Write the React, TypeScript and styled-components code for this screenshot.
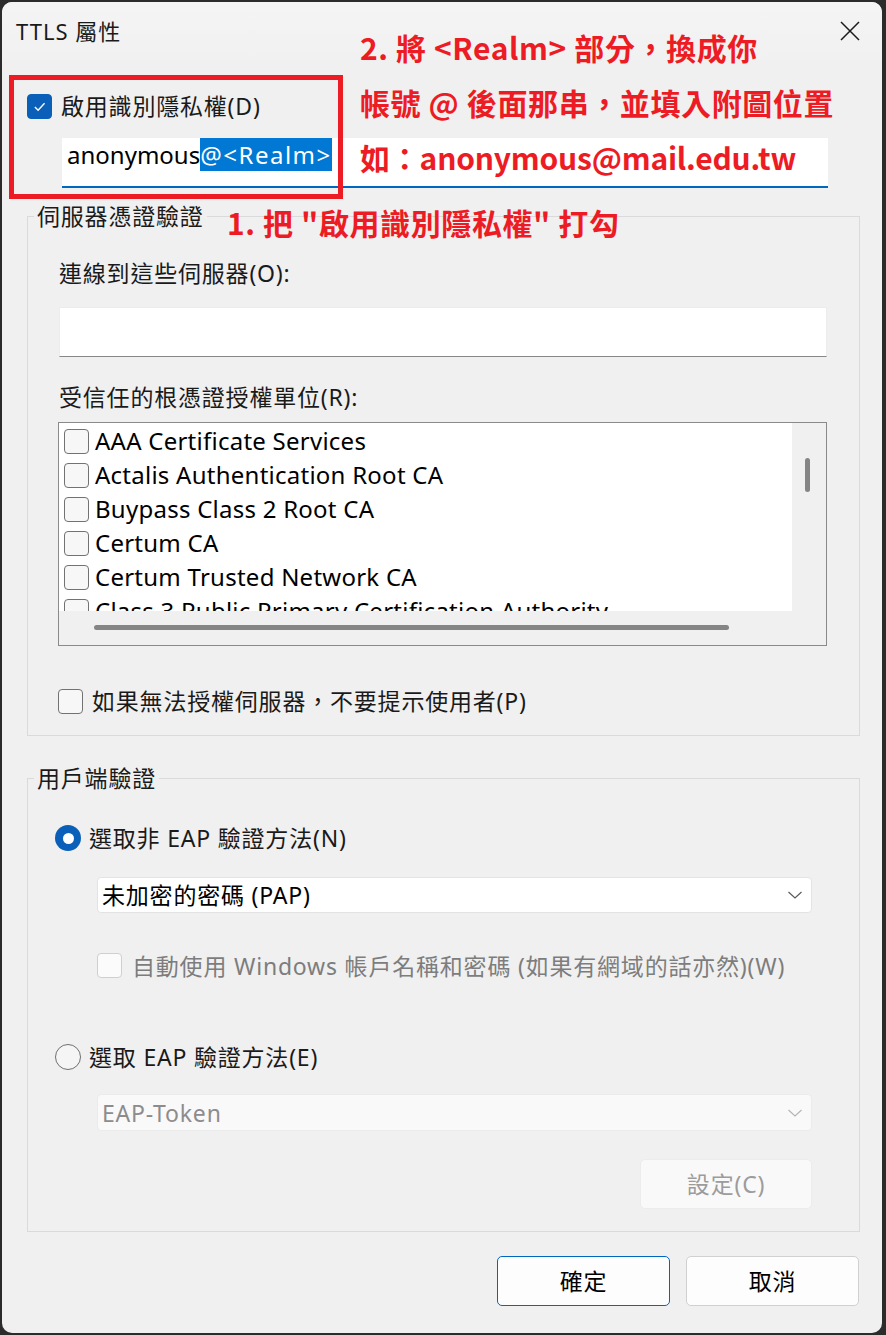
import React from "react";
import styled, { createGlobalStyle } from "styled-components";

const GlobalStyle = createGlobalStyle`
  html, body { margin: 0; padding: 0; background: #2b2b2b; }
  body {
    width: 886px; height: 1335px; overflow: hidden;
    font-family: "Noto Sans", "Noto Sans CJK TC", sans-serif;
    color: #1a1a1a;
  }
  * { box-sizing: border-box; }
`;

const UI_FONT = `"Noto Sans", "Noto Sans CJK TC", sans-serif`;

const Window = styled.div`
  position: relative;
  margin: 2px 4px 2px 2px;
  width: 880px;
  height: 1331px;
  background: #f0f0f0;
  border-radius: 10px;
  overflow: hidden;
  display: flex;
  flex-direction: column;
`;

const TitleBar = styled.header`
  flex: none;
  height: 58px;
  display: flex;
  align-items: center;
  justify-content: space-between;
  padding: 0 22px 0 14px;
  background: linear-gradient(#f4f4f4, #f1f1f1);
`;

const Title = styled.h1`
  margin: 0;
  font: 400 22px/28px ${UI_FONT};
  letter-spacing: 1px;
  color: #1a1a1a;
`;

const CloseButton = styled.button`
  width: 20px;
  height: 20px;
  padding: 0;
  border: 0;
  background: transparent;
  display: flex;
  align-items: center;
  justify-content: center;
`;

const Content = styled.main`
  flex: 1;
  display: flex;
  flex-direction: column;
  padding: 0 22px 0 25px;
`;

const Row = styled.div<{ $top?: number; $left?: number; $gap?: number; $h?: number }>`
  display: flex;
  align-items: center;
  gap: ${(p) => p.$gap ?? 8}px;
  margin-top: ${(p) => p.$top ?? 0}px;
  margin-left: ${(p) => p.$left ?? 0}px;
  height: ${(p) => p.$h ?? 26}px;
  white-space: nowrap;
`;

const Label = styled.span<{ $muted?: boolean }>`
  font: 400 23px/30px ${UI_FONT};
  letter-spacing: 0.8px;
  color: ${(p) => (p.$muted ? "#7d7d7d" : "#1a1a1a")};
`;

const FieldLabel = styled.div<{ $top: number }>`
  margin-top: ${(p) => p.$top}px;
  font: 400 23px/30px ${UI_FONT};
  letter-spacing: 0.8px;
  color: #1a1a1a;
`;

const Box = styled.span<{ $checked?: boolean; $disabled?: boolean }>`
  flex: none;
  width: 25px;
  height: 25px;
  border-radius: 4px;
  display: flex;
  align-items: center;
  justify-content: center;
  background: ${(p) => (p.$checked ? "#0a5fb8" : p.$disabled ? "#fbfbfb" : "#f7f7f7")};
  border: ${(p) =>
    p.$checked ? "1px solid #0a5fb8" : p.$disabled ? "1.5px solid #cfcfcf" : "1.5px solid #727272"};
`;

const Radio = styled.span<{ $checked?: boolean }>`
  flex: none;
  width: 26px;
  height: 26px;
  border-radius: 50%;
  display: flex;
  align-items: center;
  justify-content: center;
  background: ${(p) => (p.$checked ? "#0a5fb8" : "#f5f5f5")};
  border: ${(p) => (p.$checked ? "none" : "1.5px solid #6f6f6f")};
  &::after {
    content: "";
    display: ${(p) => (p.$checked ? "block" : "none")};
    width: 11px;
    height: 11px;
    border-radius: 50%;
    background: #ffffff;
  }
`;

const IdentityInput = styled.div`
  margin: 19px 32px 0 35px;
  height: 50px;
  background: #ffffff;
  border-bottom: 2px solid #0067c0;
  padding: 3px 0 0 5px;
  font: 400 24px/28px ${UI_FONT};
  color: #000;
  white-space: nowrap;
`;

const Selected = styled.span`
  background: #0078d4;
  color: #ffffff;
  letter-spacing: 1.5px;
`;

const Group = styled.fieldset<{ $top: number }>`
  margin: ${(p) => p.$top}px 0 0 0;
  padding: 0;
  min-width: 0;
  border: 1px solid #dadada;
`;

const Legend = styled.legend`
  margin-left: 6px;
  padding: 0 3px;
  font: 400 23px/24px ${UI_FONT};
  letter-spacing: 0.8px;
  color: #1a1a1a;
`;

const GroupBody = styled.div<{ $pad: string }>`
  display: flex;
  flex-direction: column;
  padding: ${(p) => p.$pad};
`;

const TextBox = styled.div`
  margin-top: 19px;
  height: 50px;
  background: #ffffff;
  border: 1px solid #ececec;
  border-bottom: 1px solid #878787;
`;

const ListBox = styled.div`
  margin: 10px 0 0 -1px;
  height: 224px;
  border: 1px solid #8a8a8a;
  background: #f0f0f0;
  display: grid;
  grid-template-columns: 1fr 34px;
  grid-template-rows: 188px 34px;
`;

const ListViewport = styled.div`
  background: #ffffff;
  overflow: hidden;
  padding: 1px 0 0 5px;
`;

const ListRow = styled.div`
  height: 34px;
  display: flex;
  align-items: center;
  gap: 6px;
  white-space: nowrap;
  font: 400 24px/30px ${UI_FONT};
  letter-spacing: 0.25px;
  color: #000;
`;

const VScroll = styled.div`
  padding: 35px 0 0 13px;
`;

const HScroll = styled.div`
  grid-column: 1 / 3;
  padding: 14px 0 0 35px;
`;

const Thumb = styled.div<{ $w: number; $h: number }>`
  width: ${(p) => p.$w}px;
  height: ${(p) => p.$h}px;
  border-radius: 3px;
  background: #858585;
`;

const Select = styled.div<{ $top: number; $disabled?: boolean; $h: number }>`
  margin: ${(p) => p.$top}px 0 0 42px;
  height: ${(p) => p.$h}px;
  display: flex;
  align-items: center;
  justify-content: space-between;
  padding: 0 8px 0 4px;
  border-radius: 4px;
  background: ${(p) => (p.$disabled ? "#f9f9f9" : "#ffffff")};
  border: 1px solid ${(p) => (p.$disabled ? "#ebebeb" : "#e3e3e3")};
  font: 400 23px/30px ${UI_FONT};
  letter-spacing: 0.8px;
  color: ${(p) => (p.$disabled ? "#8c8c8c" : "#000")};
`;

const Button = styled.button<{ $primary?: boolean; $disabled?: boolean }>`
  width: 173px;
  height: 50px;
  border-radius: 5px;
  background: ${(p) => (p.$disabled ? "#f9f9f9" : "#fdfdfd")};
  border: 1px solid ${(p) => (p.$primary ? "#0067c0" : p.$disabled ? "#ececec" : "#d0d0d0")};
  font: 400 23px/30px ${UI_FONT};
  letter-spacing: 0.8px;
  color: ${(p) => (p.$disabled ? "#9c9c9c" : "#000")};
  padding: 0;
`;

const SettingsButton = styled(Button)`
  margin-top: 28px;
  align-self: flex-end;
  width: 172px;
`;

const Footer = styled.footer`
  margin: 24px 1px 0 0;
  display: flex;
  justify-content: flex-end;
  gap: 16px;
`;

const RedBox = styled.div`
  position: absolute;
  left: 7px;
  top: 73px;
  width: 334px;
  height: 124px;
  border: 5px solid #ed1c24;
  pointer-events: none;
`;

const Annotation = styled.div<{ $x: number; $y: number; $spacing?: number }>`
  position: absolute;
  left: ${(p) => p.$x}px;
  top: ${(p) => p.$y}px;
  font: 700 30px/40px "Noto Sans CJK TC", "Noto Sans", sans-serif;
  letter-spacing: ${(p) => p.$spacing ?? 0.6}px;
  color: #ed1c24;
  white-space: nowrap;
  pointer-events: none;
`;

const Chevron = ({ color }: { color: string }) => (
  <svg width="16" height="10" viewBox="0 0 16 10">
    <polyline points="1.5,2 8,8 14.5,2" fill="none" stroke={color} strokeWidth="1.2" />
  </svg>
);

const Check = () => (
  <svg width="25" height="25" viewBox="0 0 25 25">
    <path d="M7.5 13 L11 16.5 L18 9" fill="none" stroke="#ffffff" strokeWidth="1.5" />
  </svg>
);

const certs = [
  "AAA Certificate Services",
  "Actalis Authentication Root CA",
  "Buypass Class 2 Root CA",
  "Certum CA",
  "Certum Trusted Network CA",
  "Class 3 Public Primary Certification Authority",
];

export default function App() {
  return (
    <>
      <GlobalStyle />
      <Window>
        <TitleBar>
          <Title>TTLS 屬性</Title>
          <CloseButton aria-label="關閉">
            <svg width="20" height="20" viewBox="0 0 20 20">
              <path d="M1 1 L19 19 M19 1 L1 19" stroke="#1a1a1a" strokeWidth="1.5" />
            </svg>
          </CloseButton>
        </TitleBar>
        <Content>
          <Row $top={33} $gap={9}>
            <Box $checked>
              <Check />
            </Box>
            <Label>啟用識別隱私權(D)</Label>
          </Row>
          <IdentityInput>
            anonymous<Selected>@&lt;Realm&gt;</Selected>
          </IdentityInput>

          <Group $top={16}>
            <Legend>伺服器憑證驗證</Legend>
            <GroupBody $pad="30px 32px 21px 31px">
              <FieldLabel $top={0}>連線到這些伺服器(O):</FieldLabel>
              <TextBox />
              <FieldLabel $top={25}>受信任的根憑證授權單位(R):</FieldLabel>
              <ListBox>
                <ListViewport>
                  {certs.map((c) => (
                    <ListRow key={c}>
                      <Box />
                      <span>{c}</span>
                    </ListRow>
                  ))}
                </ListViewport>
                <VScroll>
                  <Thumb $w={5} $h={34} />
                </VScroll>
                <HScroll>
                  <Thumb $w={635} $h={5} />
                </HScroll>
              </ListBox>
              <Row $top={42} $left={-1} $gap={9}>
                <Box />
                <Label>如果無法授權伺服器，不要提示使用者(P)</Label>
              </Row>
            </GroupBody>
          </Group>

          <Group $top={30}>
            <Legend>用戶端驗證</Legend>
            <GroupBody $pad="35px 47px 22px 27px">
              <Row $gap={8}>
                <Radio $checked />
                <Label>選取非 EAP 驗證方法(N)</Label>
              </Row>
              <Select $top={26} $h={36}>
                <span>未加密的密碼 (PAP)</span>
                <Chevron color="#5a5a5a" />
              </Select>
              <Row $top={40} $left={42} $gap={10} $h={25}>
                <Box $disabled />
                <Label $muted>自動使用 Windows 帳戶名稱和密碼 (如果有網域的話亦然)(W)</Label>
              </Row>
              <Row $top={66} $gap={8}>
                <Radio />
                <Label>選取 EAP 驗證方法(E)</Label>
              </Row>
              <Select $top={24} $h={37} $disabled>
                <span>EAP-Token</span>
                <Chevron color="#b5b5b5" />
              </Select>
              <SettingsButton $disabled>設定(C)</SettingsButton>
            </GroupBody>
          </Group>

          <Footer>
            <Button $primary>確定</Button>
            <Button>取消</Button>
          </Footer>
        </Content>

        <RedBox />
        <Annotation $x={358} $y={25}>2. 將 &lt;Realm&gt; 部分，換成你</Annotation>
        <Annotation $x={358} $y={80}>帳號 @ 後面那串，並填入附圖位置</Annotation>
        <Annotation $x={358} $y={135} $spacing={-0.2}>如：anonymous@mail.edu.tw</Annotation>
        <Annotation $x={225} $y={200}>1. 把 "啟用識別隱私權" 打勾</Annotation>
      </Window>
    </>
  );
}
